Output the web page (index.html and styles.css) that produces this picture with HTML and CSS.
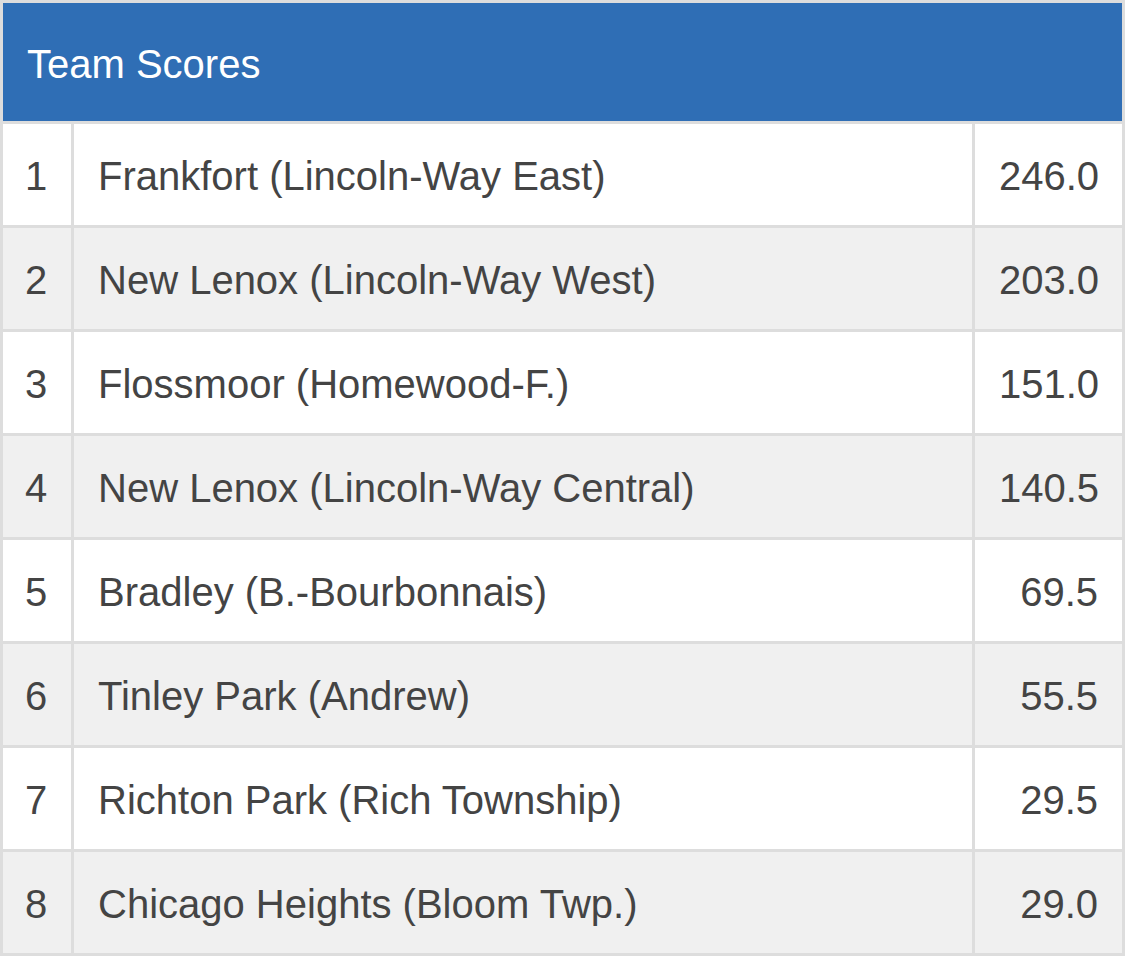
FILE: index.html
```html
<!DOCTYPE html>
<html lang="en">
<head>
<meta charset="utf-8">
<title>Team Scores</title>
<link rel="stylesheet" href="styles.css">
</head>
<body>
<table class="scores">
  <colgroup>
    <col class="col-rank">
    <col class="col-team">
    <col class="col-score">
  </colgroup>
  <thead>
    <tr><th colspan="3" class="title">Team Scores</th></tr>
  </thead>
  <tbody>
    <tr><td class="rank">1</td><td class="team">Frankfort (Lincoln-Way East)</td><td class="score">246.0</td></tr>
    <tr><td class="rank">2</td><td class="team">New Lenox (Lincoln-Way West)</td><td class="score">203.0</td></tr>
    <tr><td class="rank">3</td><td class="team">Flossmoor (Homewood-F.)</td><td class="score">151.0</td></tr>
    <tr><td class="rank">4</td><td class="team">New Lenox (Lincoln-Way Central)</td><td class="score">140.5</td></tr>
    <tr><td class="rank">5</td><td class="team">Bradley (B.-Bourbonnais)</td><td class="score">69.5</td></tr>
    <tr><td class="rank">6</td><td class="team">Tinley Park (Andrew)</td><td class="score">55.5</td></tr>
    <tr><td class="rank">7</td><td class="team">Richton Park (Rich Township)</td><td class="score">29.5</td></tr>
    <tr><td class="rank">8</td><td class="team">Chicago Heights (Bloom Twp.)</td><td class="score">29.0</td></tr>
  </tbody>
</table>
</body>
</html>
```
FILE: styles.css
```css
html, body {
  margin: 0;
  padding: 0;
  background: #ffffff;
}

body {
  font-family: "Liberation Sans", Arial, Helvetica, sans-serif;
}

.scores {
  width: 1125px;
  table-layout: fixed;
  border-collapse: separate;
  border-spacing: 3px;
  background: #dddddd;
}

.col-rank { width: 68px; }
.col-score { width: 147px; }

.scores th,
.scores td {
  padding: 4px 24px 0;
  box-sizing: border-box;
  vertical-align: middle;
  white-space: nowrap;
}

.title {
  height: 118px;
  background: #2f6eb5;
  color: #ffffff;
  font-weight: normal;
  font-size: 40px;
  text-align: left;
  padding-top: 2px;
  padding-left: 24px;
}

.scores td {
  height: 101px;
  font-size: 40px;
  color: #444444;
}

.scores tbody tr:nth-child(odd) td { background: #ffffff; }
.scores tbody tr:nth-child(even) td { background: #f0f0f0; }

.rank { text-align: left; padding-left: 22px !important; padding-right: 0 !important; }
.team { text-align: left; }
.score { text-align: right; }
```
